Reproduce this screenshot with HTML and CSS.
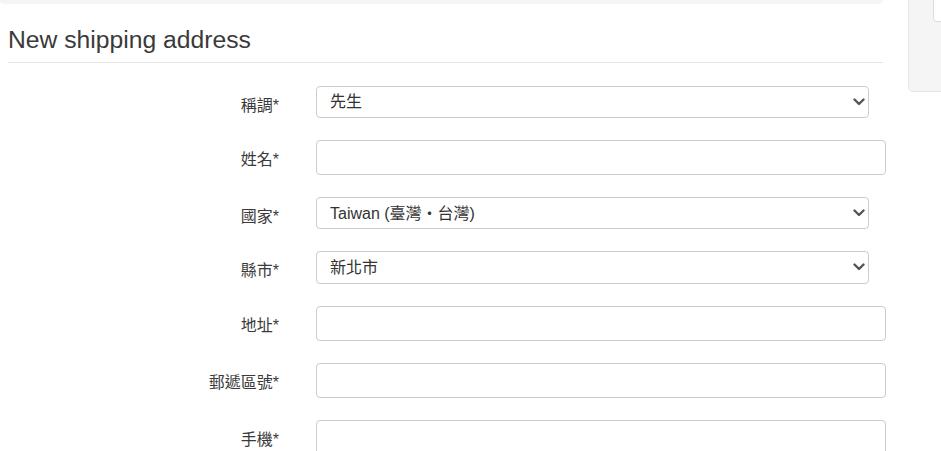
FILE: index.html
```html
<!DOCTYPE html>
<html lang="zh-Hant">
<head>
<meta charset="utf-8">
<title>New shipping address</title>
<link rel="stylesheet" href="styles.css">
</head>
<body>
<div class="page">
  <main class="main">
    <div class="well"></div>
    <h2 class="section-title">New shipping address</h2>
    <form class="address-form">
      <div class="form-row">
        <label class="form-label">稱調*</label>
        <div class="select-wrap">
          <select class="form-select"><option>先生</option><option>小姐</option></select>
          <svg class="chevron" viewBox="0 0 12 8" width="12" height="8"><path d="M1.5 1.5 6 6l4.5-4.5" fill="none" stroke="#555" stroke-width="2.4" stroke-linecap="round" stroke-linejoin="round"/></svg>
        </div>
      </div>
      <div class="form-row">
        <label class="form-label">姓名*</label>
        <input class="form-input" type="text">
      </div>
      <div class="form-row">
        <label class="form-label">國家*</label>
        <div class="select-wrap">
          <select class="form-select"><option>Taiwan (臺灣・台灣)</option></select>
          <svg class="chevron" viewBox="0 0 12 8" width="12" height="8"><path d="M1.5 1.5 6 6l4.5-4.5" fill="none" stroke="#555" stroke-width="2.4" stroke-linecap="round" stroke-linejoin="round"/></svg>
        </div>
      </div>
      <div class="form-row">
        <label class="form-label">縣市*</label>
        <div class="select-wrap">
          <select class="form-select"><option>新北市</option><option>臺北市</option></select>
          <svg class="chevron" viewBox="0 0 12 8" width="12" height="8"><path d="M1.5 1.5 6 6l4.5-4.5" fill="none" stroke="#555" stroke-width="2.4" stroke-linecap="round" stroke-linejoin="round"/></svg>
        </div>
      </div>
      <div class="form-row">
        <label class="form-label">地址*</label>
        <input class="form-input" type="text">
      </div>
      <div class="form-row">
        <label class="form-label">郵遞區號*</label>
        <input class="form-input" type="text">
      </div>
      <div class="form-row">
        <label class="form-label">手機*</label>
        <input class="form-input" type="text">
      </div>
    </form>
  </main>
  <aside class="sidebar">
    <div class="sidebar-card"></div>
  </aside>
</div>
</body>
</html>
```
FILE: styles.css
```css
html, body {
  margin: 0;
  padding: 0;
  background: #fff;
  overflow: hidden;
}

body {
  font-family: "Liberation Sans", "Noto Sans CJK TC", sans-serif;
  color: #333;
}

.page {
  display: flex;
  align-items: flex-start;
  gap: 25px;
  padding-left: 8px;
}

.main {
  width: 875px;
  flex: none;
}

.well {
  height: 4px;
  margin-left: -8px;
  background: #f5f5f5;
  border-radius: 0 0 5px 5px;
}

.section-title {
  margin: 22px 0 0;
  padding-bottom: 9px;
  border-bottom: 1px solid #e5e5e5;
  font-size: 24.7px;
  font-weight: 400;
  line-height: 27px;
  color: #3a3a3a;
}

.address-form {
  margin-top: 22.6px;
}

.form-row {
  display: flex;
  align-items: flex-start;
  margin-bottom: 22px;
}

.form-label {
  width: 271px;
  flex: none;
  padding-top: 10px;
  text-align: right;
  font-size: 16px;
  line-height: 20px;
  color: #3a3a3a;
}

.select-wrap {
  position: relative;
  flex: none;
  margin-left: 37px;
  width: 553px;
}

.form-select {
  display: block;
  width: 100%;
  height: 32.4px;
  margin: 0;
  padding: 0 30px 0 13px;
  border: 1px solid #ccc;
  border-radius: 4px;
  background: #fff;
  font-family: "Liberation Sans", "Noto Sans CJK TC", sans-serif;
  font-size: 16px;
  color: #333;
  -webkit-appearance: none;
  appearance: none;
  box-sizing: border-box;
}

.chevron {
  position: absolute;
  right: 4px;
  top: 12px;
  pointer-events: none;
}

.form-input {
  display: block;
  flex: none;
  width: 570px;
  height: 35px;
  margin: 0 0 0 37px;
  padding: 0 13px;
  border: 1px solid #ccc;
  border-radius: 4px;
  background: #fff;
  box-sizing: border-box;
  font-size: 15px;
}

.sidebar {
  flex: none;
  width: 60px;
  height: 101px;
  margin-top: -9px;
  background: #f5f5f5;
  border: 1px solid #e6e6e6;
  border-radius: 5px;
  box-sizing: border-box;
  padding-left: 24px;
}

.sidebar-card {
  height: 30px;
  background: #fff;
  border: 1px solid #dcdcdc;
  border-radius: 4px;
  box-sizing: border-box;
}
```
